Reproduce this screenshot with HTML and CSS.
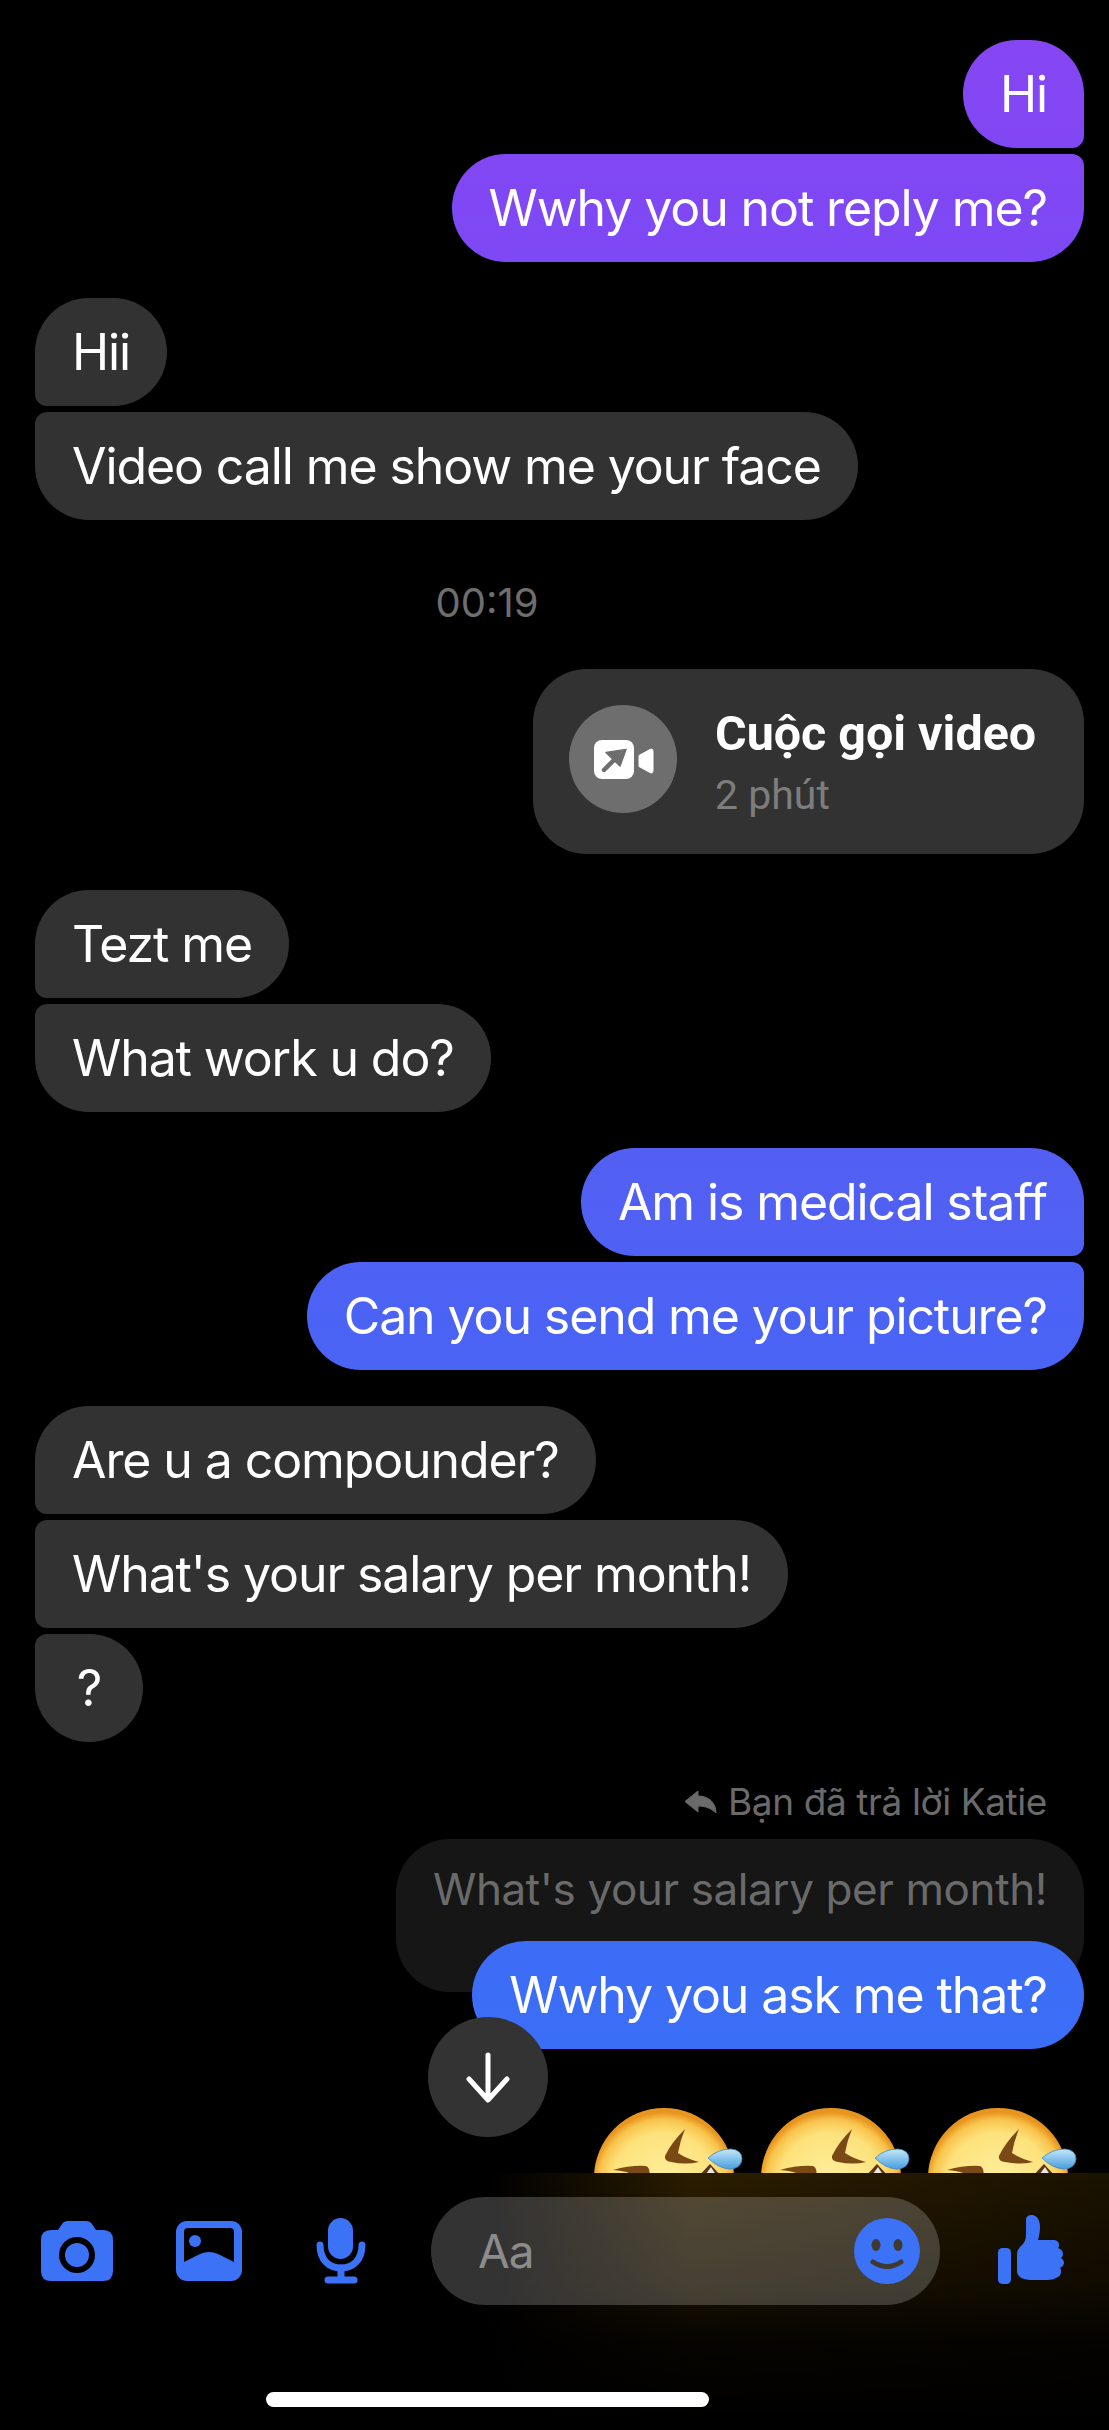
FILE: index.html
```html
<!DOCTYPE html>
<html lang="vi">
<head>
    <meta charset="UTF-8">
    <meta name="viewport" content="width=device-width, initial-scale=1.0">
    <title>Messenger</title>
    <link rel="stylesheet" href="styles.css">
</head>
<body>

<div class="chat">
    <!-- First exchange -->
    <div class="group mine">
        <div class="bubble first">Hi</div>
        <div class="bubble last">Wwhy you not reply me?</div>
    </div>
    <div class="group theirs">
        <div class="bubble first">Hii</div>
        <div class="bubble last">Video call me show me your face</div>
    </div>

    <div class="stamp">00:19</div>

    <div class="group mine">
        <div class="call">
            <div class="call-icon">
                <svg viewBox="0 0 108 108" width="108" height="108">
                    <rect x="25" y="35" width="40" height="39" rx="8" fill="#fff"/>
                    <path d="M70 50.5 81 44.5Q84 43 84 46.5V65.5Q84 69 81 67.5L70 61.5Z" fill="#fff" stroke="#fff" stroke-width="1" stroke-linejoin="round"/>
                    <path d="M57 44.5 37 47.5 51 61Z" fill="#6e6e6e" stroke="#6e6e6e" stroke-width="1.5" stroke-linejoin="round"/>
                    <path d="M46 54 35 65" stroke="#6e6e6e" stroke-width="4.5" stroke-linecap="round"/>
                </svg>
            </div>
            <div class="call-text">
                <div class="call-title">Cuộc gọi video</div>
                <div class="call-sub">2 phút</div>
            </div>
        </div>
    </div>

    <div class="group theirs">
        <div class="bubble first">Tezt me</div>
        <div class="bubble last">What work u do?</div>
    </div>
    <div class="group mine">
        <div class="bubble first">Am is medical staff</div>
        <div class="bubble last">Can you send me your picture?</div>
    </div>
    <div class="group theirs">
        <div class="bubble first">Are u a compounder?</div>
        <div class="bubble middle">What's your salary per month!</div>
        <div class="bubble last">?</div>
    </div>

    <!-- Reply to Katie -->
    <div class="reply-label">
        <svg viewBox="0 0 32 22" width="32" height="22">
            <path d="M13 0 0 10.5 13 21V15C20 15 26 17 31 22 31 12 24 5 13 5Z" fill="#6a6a6a" stroke="#6a6a6a" stroke-width="1" stroke-linejoin="round"/>
        </svg>
        Bạn đã trả lời Katie
    </div>
    <div class="group mine">
        <div class="quoted">What's your salary per month!</div>
        <div class="bubble solo">Wwhy you ask me that?</div>
    </div>

    <div class="emojis">
        <svg class="emoji" viewBox="0 0 155 155" width="155" height="155"><use href="#laugh"/></svg>
        <svg class="emoji" viewBox="0 0 155 155" width="155" height="155"><use href="#laugh"/></svg>
        <svg class="emoji" viewBox="0 0 155 155" width="155" height="155"><use href="#laugh"/></svg>
    </div>

    <button class="scroll-down">
        <svg viewBox="0 0 120 120" width="120" height="120" fill="none" stroke="#fff" stroke-width="5" stroke-linecap="round" stroke-linejoin="round">
            <path d="M60 38V82M41 62 60 83 79 62"/>
        </svg>
    </button>
</div>

<div class="composer">
    <div class="composer-row">
        <svg class="tool-camera" viewBox="0 0 72 60" width="72" height="60">
            <path fill-rule="evenodd" fill="#3b72f6" d="M10 9H17L21 3Q23 0 27 0H45Q49 0 51 3L55 9H62Q72 9 72 19V50Q72 60 62 60H10Q0 60 0 50V19Q0 9 10 9ZM36 16A18 18 0 1 0 36 52 18 18 0 1 0 36 16Z"/>
            <circle cx="36" cy="34" r="12" fill="#3b72f6"/>
        </svg>
        <svg class="tool-image" viewBox="0 0 66 60" width="66" height="60">
            <rect width="66" height="60" rx="11" fill="#3b72f6"/>
            <path d="M8 11Q8 7 12 7H54Q58 7 58 11V41L42 33Q33 29 24 33L8 41Z" fill="#000"/>
            <circle cx="19" cy="20" r="6" fill="#3b72f6"/>
        </svg>
        <svg class="tool-mic" viewBox="0 0 52 66" width="52" height="66">
            <rect x="13" y="0" width="25" height="41" rx="12.5" fill="#3b72f6"/>
            <path d="M5 27C5 42 14 50 26 50S47 42 47 27" fill="none" stroke="#3b72f6" stroke-width="7" stroke-linecap="round"/>
            <path d="M26 50V61M13 62H39" fill="none" stroke="#3b72f6" stroke-width="7" stroke-linecap="round"/>
        </svg>
        <div class="input">
            <span class="placeholder">Aa</span>
            <svg viewBox="0 0 66 66" width="66" height="66">
                <circle cx="33" cy="33" r="33" fill="#3b72f6"/>
                <ellipse cx="22" cy="27" rx="4.5" ry="6" fill="#3e3a30"/>
                <ellipse cx="44" cy="27" rx="4.5" ry="6" fill="#3e3a30"/>
                <path d="M19 44Q33 53 47 44" fill="none" stroke="#3e3a30" stroke-width="5" stroke-linecap="round"/>
            </svg>
        </div>
        <svg class="tool-like" viewBox="0 0 66 69" width="66" height="69">
            <rect x="0" y="33" width="13" height="36" rx="4.5" fill="#3b72f6"/>
            <path fill="#3b72f6" d="M19 39C19 35 21 33 24 30 27 27 28 24 28 19V5C28 1 31 0 34 0 39 0 42 5 42 12 42 17 41 21 40 25H55C59 25 61 27 61 30 61 31 61 32 60 33 63 34 65 36 65 39 65 41 64 42 63 43 65 44 66 46 66 48 66 50 64 52 62 53 63 54 63 55 63 57 63 60 61 62 58 63 55 65 50 65 45 65H34C27 65 19 63 19 56Z"/>
        </svg>
    </div>
    <div class="home-bar"></div>
</div>

<svg class="defs" width="0" height="0">
    <defs>
        <radialGradient id="face" cx="50%" cy="55%" r="52%">
            <stop offset="0" stop-color="#fff0a0"/>
            <stop offset="0.72" stop-color="#fde27c"/>
            <stop offset="0.9" stop-color="#f8c44c"/>
            <stop offset="1" stop-color="#e8951f"/>
        </radialGradient>
        <linearGradient id="drop" x1="0" y1="0" x2="0" y2="1">
            <stop offset="0" stop-color="#c4e8f8"/>
            <stop offset="1" stop-color="#489ee0"/>
        </linearGradient>
        <g id="laugh">
            <circle cx="73" cy="70" r="70" fill="url(#face)"/>
            <path d="M94 21Q80 35 74 48 73 53 80 54 95 57 108 54 96 51 87 45 89 33 94 21Z" fill="#7a4915"/>
            <path d="M22 62Q40 57 55 58 60 60 58 70H42Q44 64 22 62Z" fill="#7a4915"/>
            <path d="M106 70 119 56 132 70Z" fill="#5a3410"/>
            <path d="M112 70 120 59 127 70Z" fill="#e8e8e8"/>
            <path d="M117 50Q127 41 140 41 151 42 151 51 150 61 138 61 127 60 117 50Z" fill="url(#drop)" stroke="#3a8cc9" stroke-width="0.8"/>
        </g>
    </defs>
</svg>

</body>
</html>
```

FILE: styles.css
```css
* {
    box-sizing: border-box;
}

body {
    margin: 0;
    width: 1109px;
    height: 2430px;
    overflow: hidden;
    background-color: #000;
    color: #fff;
    font-family: Inter, "Liberation Sans", sans-serif;
    font-size: 50px;
    letter-spacing: -1.1px;
    display: flex;
    flex-direction: column;
}

.chat {
    position: relative;
    height: 2173px;
    padding: 40px 25px 0 35px;
    overflow: hidden;
    flex-shrink: 0;
}

.group {
    display: flex;
    flex-direction: column;
    gap: 6px;
    margin-bottom: 36px;
}

.mine {
    align-items: flex-end;
}

.theirs {
    align-items: flex-start;
}

.bubble {
    min-width: 108px;
    height: 108px;
    line-height: 108px;
    padding: 0 37px;
    border-radius: 54px;
    text-align: center;
    white-space: nowrap;
}

.theirs .bubble {
    background-color: #323232;
}

/* the gradient belongs to the window, not to each bubble */
.mine .bubble {
    background: linear-gradient(180deg, #8745f3 0, #7f48f4 210px, #5160f3 1200px, #4b63f5 1316px, #3b6ef6 2050px) fixed;
}

.mine .first {
    border-bottom-right-radius: 12px;
}

.mine .last {
    border-top-right-radius: 12px;
}

.theirs .first {
    border-bottom-left-radius: 12px;
}

.theirs .middle {
    border-top-left-radius: 12px;
    border-bottom-left-radius: 12px;
}

.theirs .last {
    border-top-left-radius: 12px;
}

.stamp {
    margin: 63px 0 46px;
    padding-right: 145px;
    line-height: 40px;
    font-size: 40px;
    letter-spacing: 0;
    color: #6e6e6e;
    text-align: center;
}

.call {
    width: 551px;
    height: 185px;
    padding: 0 0 5px 36px;
    border-radius: 54px;
    background-color: #323232;
    display: flex;
    align-items: center;
    gap: 38px;
}

.call-icon {
    width: 108px;
    height: 108px;
    border-radius: 50%;
    background-color: #6e6e6e;
    flex-shrink: 0;
}

.call-icon svg {
    display: block;
}

.call-text {
    padding-top: 9px;
}

.call-title {
    font-family: Roboto, sans-serif;
    font-size: 48.4px;
    font-weight: 700;
    letter-spacing: 0;
    line-height: 52px;
}

.call-sub {
    margin-top: 10px;
    font-family: Roboto, sans-serif;
    font-size: 41px;
    letter-spacing: 0;
    line-height: 50px;
    color: #7d7d7d;
}

.reply-label {
    margin: 40px 37px 17px 0;
    line-height: 40px;
    font-size: 37px;
    letter-spacing: -0.4px;
    color: #6a6a6a;
    display: flex;
    justify-content: flex-end;
    align-items: center;
    gap: 11px;
}

.quoted {
    height: 153px;
    margin-bottom: -57px;
    padding: 25px 37px 0;
    line-height: 50px;
    font-size: 44px;
    letter-spacing: -0.4px;
    border-radius: 54px;
    background-color: #161616;
    color: #6a6a6a;
    white-space: nowrap;
}

.solo {
    position: relative;
}

.emojis {
    margin-top: 59px;
    margin-right: 4px;
    display: flex;
    justify-content: flex-end;
    gap: 12px;
}

.emoji {
    display: block;
}

.scroll-down {
    position: absolute;
    left: 428px;
    top: 2017px;
    width: 120px;
    height: 120px;
    padding: 0;
    border: none;
    border-radius: 50%;
    background-color: #333;
}

.scroll-down svg {
    display: block;
}

.composer {
    flex: 1;
    background:
        linear-gradient(180deg, rgba(0, 0, 0, 0) 0, rgba(0, 0, 0, 0.4) 110px, rgba(0, 0, 0, 0.85) 170px, #000 250px),
        linear-gradient(90deg, #000 490px, #2b1d00 690px, #1b1200 1109px);
}

.composer-row {
    height: 108px;
    margin-top: 24px;
    padding-left: 41px;
    display: flex;
    align-items: center;
}

.tool-camera {
    margin-right: 63px;
}

.tool-image {
    margin-right: 73px;
}

.tool-mic {
    margin-right: 64px;
}

.input {
    width: 509px;
    height: 108px;
    padding: 0 20px 0 47px;
    border-radius: 54px;
    background-color: rgba(255, 255, 255, 0.2);
    display: flex;
    align-items: center;
    justify-content: space-between;
}

.placeholder {
    color: #8c8c8c;
    font-size: 46px;
}

.tool-like {
    margin-left: 58px;
    margin-top: -3px;
}

.home-bar {
    width: 443px;
    height: 15px;
    margin: 87px 0 0 266px;
    border-radius: 8px;
    background-color: #fff;
}

.defs {
    position: absolute;
}
```
